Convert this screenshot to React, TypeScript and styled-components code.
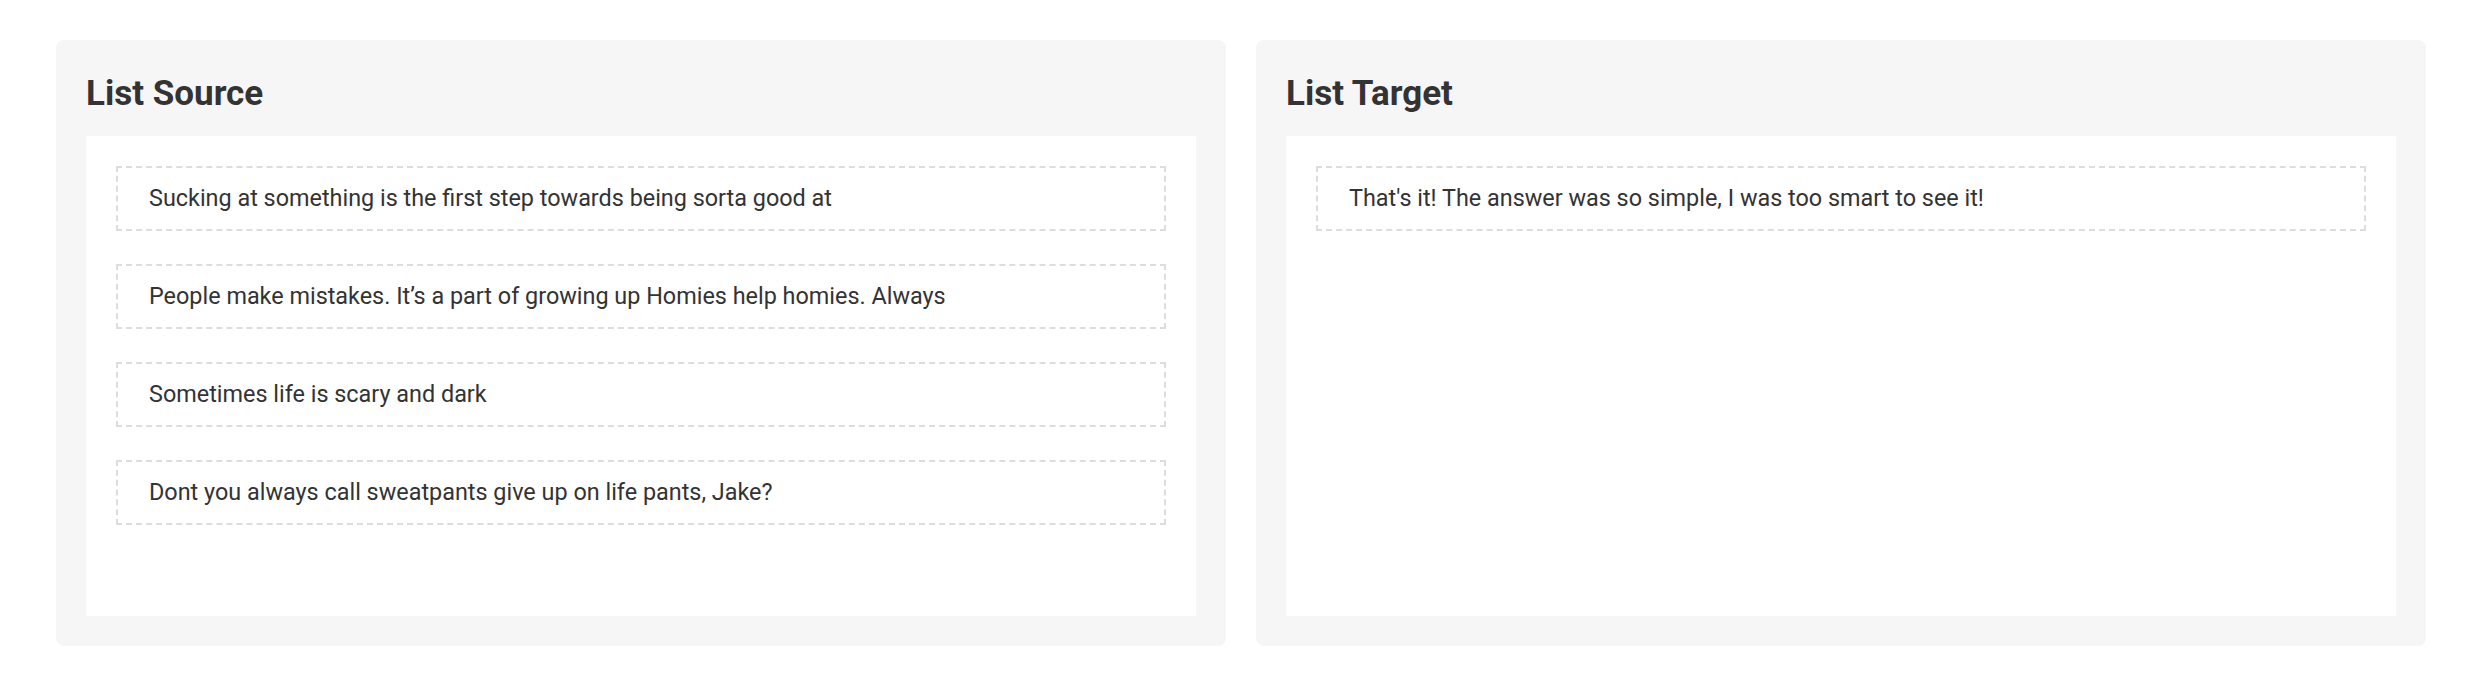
import React from "react";
import styled, { createGlobalStyle } from "styled-components";

const Global = createGlobalStyle`
  html, body { margin: 0; padding: 0; background: #ffffff; }
  body { font-family: Roboto, "Noto Sans", Arial, sans-serif; color: #333333; }
`;

const Page = styled.div`
  display: grid;
  grid-template-columns: 1fr 1fr;
  gap: 30px;
  padding: 40px 54px 40px 56px;
`;

const Panel = styled.section`
  background: #f6f6f6;
  border-radius: 8px;
  padding: 30px;
  display: flex;
  flex-direction: column;
`;

const Title = styled.h2`
  margin: 0 0 18px;
  font-size: 35px;
  line-height: 48px;
  font-weight: 700;
  color: #333333;
`;

const ListBox = styled.div`
  background: #ffffff;
  height: 480px;
  box-sizing: border-box;
  padding: 30px;
  display: flex;
  flex-direction: column;
  gap: 33px;
`;

const Item = styled.div`
  border: 2px dashed #dddddd;
  padding: 17px 31px;
  font-size: 23.4px;
  line-height: 27px;
  color: #333333;
`;

const source = [
  "Sucking at something is the first step towards being sorta good at",
  "People make mistakes. It\u2019s a part of growing up Homies help homies. Always",
  "Sometimes life is scary and dark",
  "Dont you always call sweatpants give up on life pants, Jake?",
];

const target = ["That's it! The answer was so simple, I was too smart to see it!"];

export default function App() {
  return (
    <>
      <Global />
      <Page>
        <Panel>
          <Title>List Source</Title>
          <ListBox>
            {source.map((t) => (
              <Item key={t}>{t}</Item>
            ))}
          </ListBox>
        </Panel>
        <Panel>
          <Title>List Target</Title>
          <ListBox>
            {target.map((t) => (
              <Item key={t}>{t}</Item>
            ))}
          </ListBox>
        </Panel>
      </Page>
    </>
  );
}
